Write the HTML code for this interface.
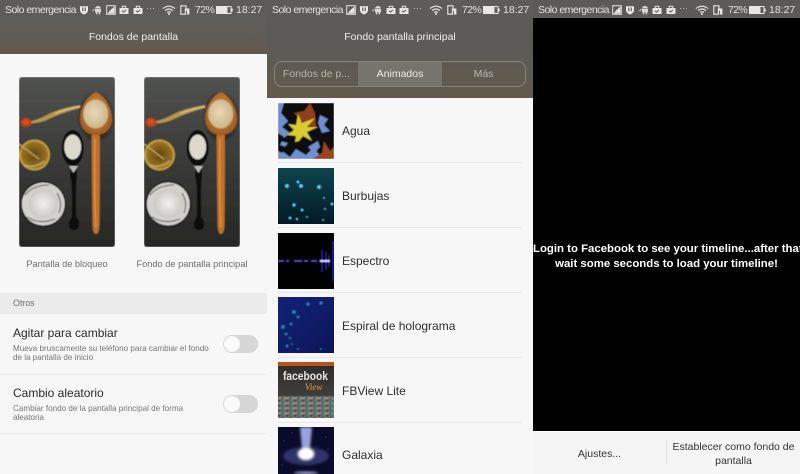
<!DOCTYPE html>
<html><head><meta charset="utf-8">
<style>
html,body{margin:0;padding:0;background:#f7f7f7}
body{width:800px;height:474px;position:relative;overflow:hidden;font-family:"Liberation Sans",sans-serif}
.a{position:absolute;white-space:nowrap}
.p{position:absolute;top:0;height:474px;background:#f7f7f7;overflow:hidden}
.st{color:#e4e2de;font-size:10.5px;line-height:12px;top:4px}
.so{letter-spacing:-.52px}
.pc{letter-spacing:-.6px}
.ttl{color:#efedea;font-size:10.5px;line-height:14px;top:30px;left:0;text-align:center}
.hd{position:absolute;left:0;top:0;width:267px;background:linear-gradient(180deg,#5d5c59 0,#5f5d59 40%,#625a50 100%)}
.sep{position:absolute;height:1px;background:#e8e8e8}
.li{position:absolute;left:75px;color:#2e2e2e;font-size:12px;line-height:16px;white-space:nowrap}
.th{position:absolute;left:11px;width:56px;height:56px;display:block}
.tg{position:absolute;left:223px;width:35px;height:18px;border-radius:9px;background:#d6d6d6}
.tg i{position:absolute;left:1px;top:1px;width:16px;height:16px;border-radius:8px;background:#fafafa}
.sub{color:#767676;font-size:8.1px;line-height:9.5px;left:13px}
.t2{color:#2a2a2a;font-size:12px;line-height:16px;left:13px}
</style></head><body>
<svg width="0" height="0" style="position:absolute">
<defs>
<filter id="b" x="-5%" y="-5%" width="110%" height="110%"><feGaussianBlur stdDeviation=".4"/></filter>
<filter id="b2" x="-30%" y="-30%" width="160%" height="160%"><feGaussianBlur stdDeviation="1.4"/></filter>
<linearGradient id="slate" x1="0" y1="0" x2="0" y2="1"><stop offset="0" stop-color="#515251"/><stop offset=".4" stop-color="#3d3e3c"/><stop offset="1" stop-color="#272725"/></linearGradient>
<radialGradient id="wood" cx=".5" cy=".45" r=".6"><stop offset="0" stop-color="#dc9440"/><stop offset="1" stop-color="#9c561c"/></radialGradient>
<radialGradient id="grain" cx=".45" cy=".45" r=".6"><stop offset="0" stop-color="#e8dab8"/><stop offset="1" stop-color="#c9b286"/></radialGradient>
<radialGradient id="gold" cx=".5" cy=".5" r=".55"><stop offset="0" stop-color="#5f4413"/><stop offset=".7" stop-color="#94701f"/><stop offset="1" stop-color="#d2ae50"/></radialGradient>
<radialGradient id="salt" cx=".5" cy=".5" r=".5"><stop offset="0" stop-color="#f3f1ee"/><stop offset="1" stop-color="#cbc9c4"/></radialGradient>
<symbol id="wall" viewBox="0 0 96 170">
<g filter="url(#b)">
<rect width="96" height="170" rx="3" fill="url(#slate)"/>
<path d="M0 12h96M0 24h96M0 37h96M0 52h96" stroke="#666" stroke-width=".6" opacity=".3"/>
<ellipse cx="77" cy="40" rx="17" ry="24" fill="#000" opacity=".3" filter="url(#b2)"/>
<path d="M72.600 58 Q73 110 73.500 148 Q74 157 77 157 Q80 157 80.500 148 Q81 110 80.800 58Z" fill="#c0702a"/>
<path d="M76 62 Q75 110 77 150" stroke="#dd9a4a" stroke-width="1.200" fill="none"/>
<path d="M77 15 C66 20 60.500 34 61 43 C62 54 70 58 77 58 C84 58 92.500 54 93 43 C93.500 34 88 20 77 15Z" fill="url(#wood)"/>
<ellipse cx="76.700" cy="37" rx="12.500" ry="14.500" fill="url(#grain)"/>
<path d="M61.500 28 Q40 31 26 39 Q18 43 12 44 L12 46.500 Q22 46 30 42 Q42 36 61 31Z" fill="#b59548"/>
<path d="M61 29.500 Q48 32 36 36.500" stroke="#e0d09c" stroke-width=".9" fill="none"/>
<ellipse cx="7" cy="45.500" rx="5.500" ry="4.800" fill="#b53c17"/>
<ellipse cx="7" cy="45" rx="3.800" ry="3" fill="#d24f1f"/>
<circle cx="15.500" cy="78" r="15.500" fill="url(#gold)"/>
<circle cx="15.500" cy="78" r="14.500" fill="none" stroke="#c49c40" stroke-width="1.500"/>
<path d="M0 67 L20 82" stroke="#c9a85a" stroke-width="1.300"/>
<path d="M0 71 L14 80" stroke="#8d6c2a" stroke-width="1"/>
<path d="M5 88 Q15 92 26 84" stroke="#d2b468" stroke-width="2" fill="none" opacity=".7"/>
<ellipse cx="53.700" cy="71" rx="11" ry="18" fill="#0e0e0e"/>
<ellipse cx="53.700" cy="70" rx="8.500" ry="12.500" fill="#dcd8ce"/>
<path d="M52 88 L51 99 Q53 106 53 118 L53 140 Q50 143 50 147 Q50 153 55 153 Q60 153 60 147 Q60 143 57 140 L57 118 Q57 106 58 99 L58 88Z" fill="#0c0c0c"/>
<path d="M50 89 L59 89 L54.500 96Z" fill="#bdbdb8"/>
<circle cx="24.300" cy="127" r="23" fill="#1c1c1b"/>
<circle cx="24.300" cy="127" r="21.500" fill="#d2d1ce"/>
<path d="M6 118 Q14 108 30 108 M8 140 Q20 148 36 142 M38 116 Q44 126 40 136" stroke="#76756f" stroke-width="1.300" fill="none"/>
<circle cx="24.300" cy="126.500" r="14.500" fill="url(#salt)"/>
</g>
</symbol>
<symbol id="sh" viewBox="0 0 10 10"><path d="M1 1.200 H9 V5 Q9 8 5 9.500 Q1 8 1 5Z" fill="#ecebe8"/><path d="M3.800 2.500 V6.300 M6.200 2.500 V6.300" stroke="#55534f" stroke-width="1.100"/></symbol>
<symbol id="an" viewBox="0 0 10 10"><path d="M3 3.500 Q3.500 1 6 1 Q8.500 1 9 3.500Z M3 4 H9 V7.500 H8 V9.500 H6.800 V7.500 H5.200 V9.500 H4 V7.500 H3Z" fill="#d8d6d2"/><path d="M.5 6 L2.400 4" stroke="#d8d6d2" stroke-width="1"/></symbol>
<symbol id="im" viewBox="0 0 10 10"><rect x=".7" y=".7" width="8.600" height="8.600" fill="none" stroke="#e6e4e1" stroke-width="1"/><path d="M1.500 8.500 L5 4.500 L8.500 1.500 V8.500Z" fill="#e6e4e1"/></symbol>
<symbol id="bag" viewBox="0 0 10 10"><path d="M.5 3 H9.500 V9 H.5Z" fill="#e8e6e3"/><path d="M3.300 3 V1.300 H6.700 V3" stroke="#e8e6e3" stroke-width="1" fill="none"/><path d="M3 5.800 L4.500 7.200 L7 4.800" stroke="#5a5855" stroke-width="1" fill="none"/></symbol>
<symbol id="wf" viewBox="0 0 14 10"><path d="M1 3.600 Q7 -1.200 13 3.600 M3 5.600 Q7 2.400 11 5.600 M5 7.500 Q7 6 9 7.500" stroke="#e9e7e4" stroke-width="1.100" fill="none"/><circle cx="7" cy="9" r="1" fill="#e9e7e4"/></symbol>
<symbol id="sim" viewBox="0 0 10 10"><path d="M.8 .8 H6 L6 9.200 H.8Z" fill="none" stroke="#e9e7e4" stroke-width="1.100"/><path d="M4.800 3.500 H9.400 V9.500 H4.800Z" fill="#e9e7e4"/><path d="M6.400 5.500 V9.500" stroke="#59574f" stroke-width=".9"/></symbol>
<symbol id="bat" viewBox="0 0 17 8"><rect x=".5" y=".5" width="14.500" height="7" fill="none" stroke="#e9e7e4"/><rect x="1" y="1" width="10.500" height="6" fill="#e9e7e4"/><rect x="15.500" y="2.500" width="1.200" height="3" fill="#e9e7e4"/></symbol>
</defs>
</svg>

<!-- PANEL 1 -->
<div class="p" style="left:0;width:267px">
<div class="hd" style="height:54px"></div>
<div class="a st so" style="left:5px">Solo emergencia</div>
<svg class="a" style="left:79px;top:5px" width="10" height="10"><use href="#sh"/></svg>
<svg class="a" style="left:92px;top:5px" width="10" height="10"><use href="#an"/></svg>
<svg class="a" style="left:105.500px;top:5px" width="10" height="10"><use href="#im"/></svg>
<svg class="a" style="left:119px;top:5px" width="10" height="10"><use href="#bag"/></svg>
<svg class="a" style="left:132.500px;top:5px" width="10" height="10"><use href="#bag"/></svg>
<div class="a st" style="left:146px;top:2px;color:#c9c7c3;font-size:9px">···</div>
<svg class="a" style="left:162px;top:5px" width="14" height="10"><use href="#wf"/></svg>
<svg class="a" style="left:180px;top:5px" width="10" height="10"><use href="#sim"/></svg>
<div class="a st pc" style="left:195px">72%</div>
<svg class="a" style="left:216px;top:6px" width="17" height="8"><use href="#bat"/></svg>
<div class="a st" style="left:236px">18:27</div>
<div class="a ttl" style="width:267px">Fondos de pantalla</div>

<svg class="a" style="left:19px;top:76.500px" width="96" height="170"><use href="#wall"/></svg>
<svg class="a" style="left:144px;top:76.500px" width="96" height="170"><use href="#wall"/></svg>
<div class="a" style="left:0;width:134px;top:258px;text-align:center;font-size:9.200px;line-height:12px;color:#6f6f6f">Pantalla de bloqueo</div>
<div class="a" style="left:125px;width:134px;top:258px;text-align:center;font-size:9.250px;line-height:12px;color:#6f6f6f">Fondo de pantalla principal</div>

<div class="a" style="left:0;top:293px;width:267px;height:21px;background:#ebebeb"></div>
<div class="a" style="left:13px;top:298px;font-size:8.800px;line-height:11px;color:#6d6d6d">Otros</div>
<div class="a t2" style="top:325px">Agitar para cambiar</div>
<div class="a sub" style="top:344px">Mueva bruscamente su teléfono para cambiar el fondo</div>
<div class="a sub" style="top:353px">de la pantalla de inicio</div>
<div class="sep" style="left:0;top:374px;width:267px"></div>
<div class="tg" style="top:335px"><i></i></div>
<div class="a t2" style="top:385px">Cambio aleatorio</div>
<div class="a sub" style="top:403.500px">Cambiar fondo de la pantalla principal de forma</div>
<div class="a sub" style="top:413px">aleatoria</div>
<div class="sep" style="left:0;top:433px;width:267px"></div>
<div class="tg" style="top:395px"><i></i></div>
</div>

<!-- PANEL 2 -->
<div class="p" style="left:267px;width:266px">
<div class="hd" style="height:98px;background:linear-gradient(180deg,#5d5c59 0,#5c5a56 45%,#625a4e 100%)"></div>
<div class="a st so" style="left:5px">Solo emergencia</div>
<svg class="a" style="left:78.500px;top:5px" width="10" height="10"><use href="#im"/></svg>
<svg class="a" style="left:91.500px;top:5px" width="10" height="10"><use href="#sh"/></svg>
<svg class="a" style="left:105px;top:5px" width="10" height="10"><use href="#an"/></svg>
<svg class="a" style="left:118.500px;top:5px" width="10" height="10"><use href="#bag"/></svg>
<svg class="a" style="left:132px;top:5px" width="10" height="10"><use href="#bag"/></svg>
<div class="a st" style="left:146px;top:2px;color:#c9c7c3;font-size:9px">···</div>
<svg class="a" style="left:161.500px;top:5px" width="14" height="10"><use href="#wf"/></svg>
<svg class="a" style="left:179.500px;top:5px" width="10" height="10"><use href="#sim"/></svg>
<div class="a st pc" style="left:195px">72%</div>
<svg class="a" style="left:216px;top:6px" width="17" height="8"><use href="#bat"/></svg>
<div class="a st" style="left:236px">18:27</div>
<div class="a ttl" style="width:266px">Fondo pantalla principal</div>

<div class="a" style="left:7px;top:61px;width:252px;height:26px;box-sizing:border-box;border:1px solid #85827a;border-radius:8px;overflow:hidden">
<div class="a" style="left:83px;top:0;width:84px;height:24px;background:#76746c"></div>
<div class="a" style="left:0;top:0;width:83px;height:24px;text-align:center;font-size:10.500px;line-height:25px;color:#b8b5ae">Fondos de p...</div>
<div class="a" style="left:83px;top:0;width:84px;height:24px;text-align:center;font-size:10.500px;line-height:25px;color:#ecebe8">Animados</div>
<div class="a" style="left:167px;top:0;width:83px;height:24px;text-align:center;font-size:10.500px;line-height:25px;color:#bcb9b2">Más</div>
</div>

<svg class="th" style="top:103px" viewBox="0 0 56 56">
<g filter="url(#b)"><rect width="56" height="56" fill="#6f8fd0"/>
<path d="M6 0H56V56H44L36 44L28 52L18 46L12 54L4 48L10 40L2 38L12 30L4 24L10 18L3 10Z" fill="#070707"/>
<path d="M0 30L6 34L2 42L8 44L4 50L0 48Z" fill="#0a0a0a"/>
<path d="M42 12L50 16L46 22L52 28L44 30L40 20Z M30 44L40 38L42 44L36 50Z" fill="#6f8fd0"/>
<path d="M16 10L26 8L32 0L37 10L38 24L28 22Z" fill="#8c3f1c"/>
<path d="M34 56L44 50L46 38L52 48L56 44V56Z" fill="#9a4520"/>
<path d="M21 38L17 39L18 33L9 32L16 27L10 21L18 22L20 11L24 20L37 15L29 24L40 24L29 29L34 38L25 33Z" fill="#dcca30"/></g>
</svg>
<div class="li" style="top:123px">Agua</div>
<div class="sep" style="left:11px;top:162px;width:243px"></div>

<svg class="th" style="top:167.800px" viewBox="0 0 56 56">
<defs><linearGradient id="bb" x1="0" y1="0" x2="0" y2="1"><stop offset="0" stop-color="#0d454e"/><stop offset="1" stop-color="#031a26"/></linearGradient></defs>
<rect width="56" height="56" fill="url(#bb)"/>
<g fill="#6cc6ee" filter="url(#b)"><circle cx="9" cy="18" r="2"/><circle cx="23" cy="18" r="2"/><circle cx="20" cy="14" r="1.500"/><circle cx="41" cy="19" r="2"/><circle cx="16" cy="37" r="1.700"/><circle cx="24" cy="42" r="1.500"/><circle cx="46" cy="30" r="1"/><circle cx="54" cy="36" r="1.500"/><circle cx="12" cy="50" r="1.500"/><circle cx="19" cy="51" r="1.300"/><circle cx="29" cy="49" r="1"/><circle cx="45" cy="52" r="1"/><circle cx="47" cy="41" r="1"/></g>
</svg>
<div class="li" style="top:188px">Burbujas</div>
<div class="sep" style="left:11px;top:227px;width:243px"></div>

<svg class="th" style="top:232.600px" viewBox="0 0 56 56">
<rect width="56" height="56" fill="#000"/>
<g filter="url(#b)"><path d="M0 28H43" stroke="#5048e0" stroke-width="2" stroke-dasharray="6 2 3 5 8 2 4 3"/>
<path d="M44 17V39M48 19V37" stroke="#2c2cd8" stroke-width="1.300"/><path d="M51 22V34" stroke="#2c2cd8" stroke-width="1.200"/><path d="M55 8V48" stroke="#2424d0" stroke-width="1.500"/>
<path d="M42 28H52" stroke="#d6d6ff" stroke-width="2.500"/></g>
</svg>
<div class="li" style="top:253px">Espectro</div>
<div class="sep" style="left:11px;top:292px;width:243px"></div>

<svg class="th" style="top:297.400px" viewBox="0 0 56 56">
<defs><linearGradient id="sp" x1="0" y1="0" x2="1" y2="1"><stop offset="0" stop-color="#13227a"/><stop offset="1" stop-color="#0c1656"/></linearGradient></defs>
<rect width="56" height="56" fill="url(#sp)"/>
<g fill="#1f87a8" filter="url(#b)"><circle cx="30" cy="7" r="1.800"/><circle cx="43" cy="6" r="1.800"/><circle cx="16" cy="15" r="2"/><circle cx="20" cy="20" r="1.500"/><circle cx="5" cy="30" r="2"/><circle cx="13" cy="27" r="1.500"/><circle cx="8" cy="37" r="1.500"/><circle cx="12" cy="41" r="1.200"/><circle cx="9" cy="49" r="1.500"/><circle cx="14" cy="47" r="1"/><circle cx="20" cy="52" r="1"/><circle cx="43" cy="52" r="1"/></g>
</svg>
<div class="li" style="top:318px">Espiral de holograma</div>
<div class="sep" style="left:11px;top:357px;width:243px"></div>

<svg class="th" style="top:362.200px" viewBox="0 0 56 56">
<defs><pattern id="nz" width="8" height="5" patternUnits="userSpaceOnUse"><rect width="8" height="5" fill="#5d6a66"/><rect width="3" height="2" fill="#a58a78"/><rect x="3" y="2" width="3" height="2" fill="#49707e"/><rect x="6" width="2" height="3" fill="#8a8f86"/><rect y="3" width="2" height="2" fill="#39403e"/></pattern>
<linearGradient id="fbg" x1="0" y1="0" x2="0" y2="1"><stop offset="0" stop-color="#2e2c2a"/><stop offset="1" stop-color="#4a4a48"/></linearGradient></defs>
<rect width="56" height="56" fill="url(#fbg)"/><rect width="56" height="4" fill="#b9531a"/>
<rect y="34" width="56" height="22" fill="url(#nz)" filter="url(#b)"/>
<text x="5" y="18" font-family="Liberation Sans,sans-serif" font-size="11.500" font-weight="bold" fill="#e9e6e2" textLength="45" lengthAdjust="spacingAndGlyphs">facebook</text>
<text x="27" y="28" font-family="Liberation Serif,serif" font-style="italic" font-size="9" fill="#e79a45">View</text>
</svg>
<div class="li" style="top:383px">FBView Lite</div>
<div class="sep" style="left:11px;top:422px;width:243px"></div>

<svg class="th" style="top:427px;height:47px" viewBox="0 0 56 47" preserveAspectRatio="xMidYMin slice">
<rect width="56" height="47" fill="#0a0a2a"/>
<g fill="#6a6aa8"><circle cx="6" cy="14" r=".5"/><circle cx="14" cy="6" r=".5"/><circle cx="48" cy="10" r=".5"/><circle cx="50" cy="22" r=".5"/><circle cx="4" cy="38" r=".5"/></g>
<g filter="url(#b2)"><ellipse cx="28" cy="29" rx="23" ry="9" fill="#4a4e96" opacity=".6"/><path d="M22 0H34L32 22H24Z" fill="#9aa4dc"/><ellipse cx="28" cy="27" rx="8" ry="6" fill="#fff"/><ellipse cx="28" cy="46" rx="12" ry="1.500" fill="#9a9ec8"/></g>
</svg>
<div class="li" style="top:447px">Galaxia</div>
</div>

<!-- PANEL 3 -->
<div class="p" style="left:533px;width:267px">
<div class="a" style="left:0;top:0;width:267px;height:18px;background:#5b5a56"></div>
<div class="a" style="left:0;top:18px;width:267px;height:413px;background:#000"></div>
<div class="a st so" style="left:5px">Solo emergencia</div>
<svg class="a" style="left:79px;top:5px" width="10" height="10"><use href="#im"/></svg>
<svg class="a" style="left:92px;top:5px" width="10" height="10"><use href="#sh"/></svg>
<svg class="a" style="left:105.500px;top:5px" width="10" height="10"><use href="#an"/></svg>
<svg class="a" style="left:119px;top:5px" width="10" height="10"><use href="#bag"/></svg>
<svg class="a" style="left:132.500px;top:5px" width="10" height="10"><use href="#bag"/></svg>
<div class="a st" style="left:146px;top:2px;color:#c9c7c3;font-size:9px">···</div>
<svg class="a" style="left:162px;top:5px" width="14" height="10"><use href="#wf"/></svg>
<svg class="a" style="left:180px;top:5px" width="10" height="10"><use href="#sim"/></svg>
<div class="a st pc" style="left:195px">72%</div>
<svg class="a" style="left:216px;top:6px" width="17" height="8"><use href="#bat"/></svg>
<div class="a st" style="left:236px">18:27</div>
<div class="a" style="left:0;top:242px;width:267px;text-align:center;color:#fff;font-weight:bold;font-size:11.400px;line-height:15px">Login to Facebook to see your timeline...after that<br>wait some seconds to load your timeline!</div>
<div class="a" style="left:0;top:431px;width:267px;height:43px;background:#f5f5f5;border-top:1px solid #fff;box-sizing:border-box"></div>
<div class="a" style="left:133px;top:440px;width:1px;height:24px;background:#e2e2e2"></div>
<div class="a" style="left:0;top:447px;width:133px;text-align:center;font-size:10.500px;line-height:14px;color:#333">Ajustes...</div>
<div class="a" style="left:134px;top:441px;width:133px;text-align:center;font-size:10.500px;line-height:13.500px;color:#333">Establecer como fondo de<br>pantalla</div>
</div>
</body></html>
